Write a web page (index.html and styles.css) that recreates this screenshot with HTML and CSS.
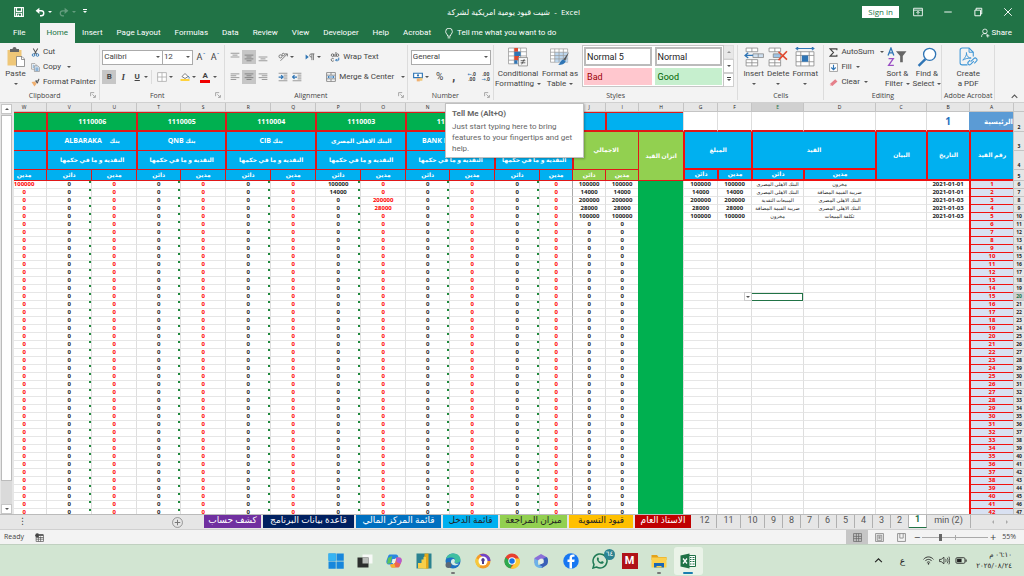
FILE: index.html
```html
<!DOCTYPE html>
<html lang="en">
<head>
    <meta charset="UTF-8">
    <meta name="viewport" content="width=device-width, initial-scale=1.0">
    <title>Excel</title>
    <link rel="stylesheet" href="styles.css">
</head>
<body>

    <!-- Title bar -->
    <div class="titlebar">
        <div class="quick">
            <button class="ico-btn" aria-label="Save"><svg viewBox="0 0 16 16"><path d="M1 1h14v14H1z M4 1v6h8V1 M4 15v-5h8v5" fill="none" stroke="#fff" stroke-width="1.8"/><path d="M6 12h2v3H6z" fill="#fff"/></svg></button>
            <button class="ico-btn" aria-label="Undo"><svg viewBox="0 0 16 16"><path d="M3 6h7a4 4 0 0 1 0 8H8" fill="none" stroke="#fff" stroke-width="2.2"/><path d="M7 1L1 6l6 5z" fill="#fff"/></svg><i class="caret light"></i></button>
            <button class="ico-btn dim" aria-label="Redo"><svg viewBox="0 0 16 16"><path d="M13 6H6a4 4 0 0 0 0 8h2" fill="none" stroke="#fff" stroke-width="2"/><path d="M9 1l6 5-6 5z" fill="#fff"/></svg><i class="caret light"></i></button>
            <button class="ico-btn" aria-label="Customize"><i class="caret light bar"></i></button>
        </div>
        <div class="title">شيت قيود يومية امريكية لشركة &nbsp;-&nbsp; Excel</div>
        <div class="window-btns">
            <button class="signin">Sign in</button>
            <button class="ico-btn" aria-label="Ribbon options"><svg viewBox="0 0 16 16"><path d="M1 2h14v12H1z M1 5h14 M8 12V7 M5.500 9.500L8 7l2.500 2.500" fill="none" stroke="#fff" stroke-width="1.400"/></svg></button>
            <button class="ico-btn" aria-label="Minimize"><svg viewBox="0 0 16 16"><path d="M2 8h12" stroke="#fff" stroke-width="1.500"/></svg></button>
            <button class="ico-btn" aria-label="Restore"><svg viewBox="0 0 16 16"><path d="M3 5h9v9H3z M5 5V2h9v9h-2" fill="none" stroke="#fff" stroke-width="1.500"/></svg></button>
            <button class="ico-btn" aria-label="Close"><svg viewBox="0 0 16 16"><path d="M2 2l12 12M14 2L2 14" stroke="#fff" stroke-width="1.500"/></svg></button>
        </div>
    </div>

    <!-- Ribbon tabs -->
    <div class="tabs">
        <a href="#" class="file">File</a>
        <a href="#" class="active">Home</a>
        <a href="#">Insert</a>
        <a href="#">Page Layout</a>
        <a href="#">Formulas</a>
        <a href="#">Data</a>
        <a href="#">Review</a>
        <a href="#">View</a>
        <a href="#">Developer</a>
        <a href="#">Help</a>
        <a href="#">Acrobat</a>
        <button class="tell"><svg viewBox="0 0 12 16"><path d="M4 12c0-3-3-3.500-3-7a5 5 0 0 1 10 0c0 3.500-3 4-3 7z M4 14.500h4" fill="none" stroke="#fff" stroke-width="1.300"/></svg>Tell me what you want to do</button>
        <button class="share"><svg viewBox="0 0 16 16"><circle cx="7" cy="5" r="4" fill="none" stroke="#fff" stroke-width="1.400"/><path d="M1 15c0-4 2-6 6-6 2 0 3 .5 4 1.500M12 10v6M9 13h6" fill="none" stroke="#fff" stroke-width="1.400"/></svg>Share</button>
    </div>

    <!-- Ribbon -->
    <div class="ribbon">
        <div class="group g-clipboard">
            <div class="body">
                <button class="big"><svg viewBox="0 0 36 40"><path d="M1 6h28v31H1z" fill="#efc778"/><path d="M6 4h5a4 4 0 0 1 8 0h5v6H6z" fill="#666"/><path d="M19 19h11l5 5v15H19z" fill="#fff" stroke="#777" stroke-width="1.500"/><path d="M29 19v6h6" fill="none" stroke="#777" stroke-width="1.500"/></svg>Paste<i class="caret"></i></button>
                <div class="stack">
                    <button class="line"><svg viewBox="0 0 16 16"><path d="M4 1l6 10M12 1L6 11" stroke="#555" stroke-width="1.800"/><circle cx="4.500" cy="12.500" r="2.300" fill="none" stroke="#2f75b5" stroke-width="1.600"/><circle cx="11.500" cy="12.500" r="2.300" fill="none" stroke="#2f75b5" stroke-width="1.600"/></svg>Cut</button>
                    <button class="line"><svg viewBox="0 0 16 16"><path d="M1 1h6l2 2v8H1z" fill="#fff" stroke="#777"/><path d="M6 5h6l3 3v7H6z" fill="#dbe7f3" stroke="#777"/><path d="M8 9h5M8 11h5M8 13h5M3 4h3M3 6h2M3 8h2" stroke="#2f75b5"/></svg>Copy<i class="caret far"></i></button>
                    <button class="line"><svg viewBox="0 0 16 16"><path d="M1 7l6-1 3 4-4 5z" fill="#f0b070"/><path d="M7 5l4 5 2-2-3-4z" fill="#555"/><path d="M11 5l3-4 1 1-2 5z" fill="#555"/></svg>Format Painter</button>
                </div>
            </div>
            <div class="label has-launch">Clipboard<svg class="launch" viewBox="0 0 10 10"><path d="M1 7V1h6M4 4l4 4M9 5v4H5" fill="none" stroke="#777"/></svg></div>
        </div>

        <div class="group g-font">
            <div class="body rows">
                <div class="row">
                    <span class="combo c-font"><select aria-label="Font"><option>Calibri</option></select></span><span class="combo c-size"><select aria-label="Font size"><option>12</option></select></span>
                    <button class="tool grow first" aria-label="Increase font size">A<sup>ˆ</sup></button>
                    <button class="tool grow" aria-label="Decrease font size">A<sup>ˇ</sup></button>
                </div>
                <div class="row">
                    <button class="tool on b">B</button>
                    <button class="tool it">I</button>
                    <button class="tool un">U</button><i class="caret"></i>
                    <i class="vsep"></i>
                    <button class="tool" aria-label="Borders"><svg viewBox="0 0 16 16"><path d="M1 1h14v14H1zM8 1v14M1 8h14" fill="#fff" stroke="#aaa" stroke-width="1.300"/></svg></button><i class="caret"></i>
                    <button class="tool wide" aria-label="Fill color"><svg viewBox="0 0 20 18"><path d="M4 8l6-6 6 6-6 4z" fill="#fff" stroke="#555" stroke-width="1.500"/><path d="M16 7c2 2 3 3 2 5" stroke="#2f75b5" stroke-width="2" fill="none"/><path d="M1 13h18v4H1z" fill="#ffd23c"/></svg></button><i class="caret"></i>
                    <button class="tool fc" aria-label="Font color">A</button><i class="caret"></i>
                </div>
            </div>
            <div class="label has-launch">Font<svg class="launch" viewBox="0 0 10 10"><path d="M1 7V1h6M4 4l4 4M9 5v4H5" fill="none" stroke="#777"/></svg></div>
        </div>

        <div class="group g-align">
            <div class="body rows">
                <div class="row">
                    <button class="tool" aria-label="Top align"><svg viewBox="0 0 16 16"><path d="M1 2h14M4 5h8M1 8h14" stroke="#888" stroke-width="1.300"/></svg></button>
                    <button class="tool on" aria-label="Middle align"><svg viewBox="0 0 16 16"><path d="M1 5h14M4 8h8M1 11h14M4 14h8" stroke="#777" stroke-width="1.300"/></svg></button>
                    <button class="tool" aria-label="Bottom align"><svg viewBox="0 0 16 16"><path d="M1 8h14M4 11h8M1 14h14" stroke="#888" stroke-width="1.300"/></svg></button>
                    <button class="tool orient" aria-label="Orientation"><svg viewBox="0 0 16 16"><path d="M4 14L15 3M11 3h4v4" fill="none" stroke="#666" stroke-width="1.300"/><circle cx="4" cy="7" r="2.500" fill="none" stroke="#666" stroke-width="1.300"/><circle cx="8.500" cy="4" r="2" fill="none" stroke="#666" stroke-width="1.300"/></svg></button><i class="caret"></i>
                    <button class="tool para" aria-label="Text direction"><svg viewBox="0 0 16 16"><path d="M1 4l5 4-5 4z" fill="#2f75b5"/><path d="M15 3H10a2.500 2.500 0 0 0 0 5h1M11 3v10M13.500 3v10" fill="none" stroke="#666" stroke-width="1.300"/></svg></button><i class="caret"></i>
                    <button class="line wrap"><svg viewBox="0 0 16 16"><circle cx="4" cy="5" r="2" fill="none" stroke="#555" stroke-width="1.300"/><path d="M6.500 3v5M9.500 0v8" stroke="#555" stroke-width="1.300"/><circle cx="12" cy="5" r="2" fill="none" stroke="#555" stroke-width="1.300"/><path d="M6 11a2.300 2.300 0 1 0 0 3" fill="none" stroke="#555" stroke-width="1.300"/><path d="M14 9v4H9M11 11l-2 2 2 2" fill="none" stroke="#2f75b5" stroke-width="1.500"/></svg>Wrap Text</button>
                </div>
                <div class="row">
                    <button class="tool" aria-label="Align left"><svg viewBox="0 0 16 16"><path d="M1 3h14M1 6h9M1 9h14M1 12h9" stroke="#888" stroke-width="1.300"/></svg></button>
                    <button class="tool on" aria-label="Center"><svg viewBox="0 0 16 16"><path d="M1 3h14M4 6h8M1 9h14M4 12h8" stroke="#777" stroke-width="1.300"/></svg></button>
                    <button class="tool" aria-label="Align right"><svg viewBox="0 0 16 16"><path d="M1 3h14M6 6h9M1 9h14M6 12h9" stroke="#888" stroke-width="1.300"/></svg></button>
                    <button class="tool orient" aria-label="Decrease indent"><svg viewBox="0 0 16 16"><path d="M1 2h14M1 14h14M9 5h6M9 8h6M9 11h6" stroke="#888" stroke-width="1.300"/><path d="M1 8h7M5 5l3 3-3 3" fill="none" stroke="#2f75b5" stroke-width="2"/></svg></button>
                    <button class="tool" aria-label="Increase indent"><svg viewBox="0 0 16 16"><path d="M1 2h14M1 14h14M9 5h6M9 8h6M9 11h6" stroke="#888" stroke-width="1.300"/><path d="M8 8H1M4 5L1 8l3 3" fill="none" stroke="#2f75b5" stroke-width="2"/></svg></button>
                    <button class="line merge"><svg viewBox="0 0 16 16"><path d="M1 1h14v14H1zM1 5h14M1 11h14M8 1v4M8 11v4" fill="#fff" stroke="#777" stroke-width="1.300"/><path d="M3 8h10M5 6L3 8l2 2M11 6l2 2-2 2" fill="none" stroke="#2f75b5" stroke-width="1.500"/></svg>Merge &amp; Center<i class="caret"></i></button>
                </div>
            </div>
            <div class="label has-launch">Alignment<svg class="launch" viewBox="0 0 10 10"><path d="M1 7V1h6M4 4l4 4M9 5v4H5" fill="none" stroke="#777"/></svg></div>
        </div>

        <div class="group g-number">
            <div class="body rows">
                <div class="row">
                    <span class="combo c-num"><select aria-label="Number format"><option>General</option></select></span>
                </div>
                <div class="row">
                    <button class="tool" aria-label="Accounting format"><svg viewBox="0 0 16 16"><path d="M1 2h14v7H1z" fill="#fff" stroke="#2f75b5" stroke-width="1.800"/><circle cx="8" cy="5.500" r="1.800" fill="#2f75b5"/><path d="M6 10h5v5H6z" fill="#f0b070"/><path d="M11 9h4v5h-4z" fill="#efc778"/></svg></button><i class="caret"></i>
                    <button class="tool pct">%</button>
                    <button class="tool comma">,</button>
                    <i class="vsep"></i>
                    <button class="tool dec" aria-label="Increase decimal"><span><b>←</b>.0</span><span>.00</span></button>
                    <button class="tool dec" aria-label="Decrease decimal"><span>.00</span><span><b>→</b>.0</span></button>
                </div>
            </div>
            <div class="label has-launch">Number<svg class="launch" viewBox="0 0 10 10"><path d="M1 7V1h6M4 4l4 4M9 5v4H5" fill="none" stroke="#777"/></svg></div>
        </div>

        <div class="group g-styles">
            <div class="body">
                <button class="big two cond"><svg viewBox="0 0 38 38"><path d="M1 2h34v30H1z" fill="#fff" stroke="#999" stroke-width="1.500"/><path d="M1 9h34M1 17h34M1 25h34M12 2v30M24 2v30" stroke="#999" stroke-width="1.500"/><path d="M12 2h7v7h-7zM12 17h9v8h-9z" fill="#e0492f"/><path d="M12 9h12v8H12zM12 25h6v7h-6z" fill="#2f75b5"/><path d="M20 20h17v16H20z" fill="#f6f6f6" stroke="#888" stroke-width="1.500"/><path d="M24 26h9M24 30h9M31 23l-5 10" stroke="#444" stroke-width="1.500"/></svg>Conditional<span>Formatting<i class="caret"></i></span></button>
                <button class="big two"><svg viewBox="0 0 42 38"><path d="M1 2h36v28H1z" fill="#fff" stroke="#999" stroke-width="1.500"/><path d="M10 9h27v21H10z" fill="#bdd7ee"/><path d="M1 9h36M1 16h36M1 23h36M10 2v28M19 2v28M28 2v28" stroke="#999" stroke-width="1.500"/><path d="M40 8l-12 16 4 3z" fill="#555"/><path d="M28 24l5 4c-2 6-8 8-16 8 4-3 5-11 11-12z" fill="#2f75b5"/></svg>Format as<span>Table<i class="caret"></i></span></button>
                <div class="gallery">
                    <button class="st picked">Normal 5</button>
                    <button class="st picked">Normal</button>
                    <button class="st bad">Bad</button>
                    <button class="st good">Good</button>
                </div>
                <div class="updown">
                    <button class="off" aria-label="Previous styles"><i class="caret up"></i></button>
                    <button aria-label="Next styles"><i class="caret"></i></button>
                    <button aria-label="More styles"><i class="caret bar"></i></button>
                </div>
            </div>
            <div class="label">Styles</div>
        </div>

        <div class="group g-cells">
            <div class="body">
                <button class="big"><svg viewBox="0 0 38 38"><path d="M4 2h22v7H4zM15 2v7M4 24h22v12H4zM15 24v12M4 30h22" fill="#fff" stroke="#888" stroke-width="1.500"/><path d="M17 13h20v7H17zM27 13v7" fill="#cfe0f0" stroke="#888" stroke-width="1.500"/><path d="M17 16H2M8 11l-6 5 6 5" fill="none" stroke="#2f75b5" stroke-width="2.500"/></svg>Insert<i class="caret"></i></button>
                <button class="big"><svg viewBox="0 0 38 38"><path d="M2 2h22v7H2zM13 2v7M2 24h22v12H2zM13 24v12M2 30h22" fill="#fff" stroke="#888" stroke-width="1.500"/><path d="M10 13h14v7H10z" fill="#9dc3e6" stroke="#888" stroke-width="1.500"/><path d="M20 9l16 15M36 8L20 25" stroke="#e0492f" stroke-width="3"/></svg>Delete<i class="caret"></i></button>
                <button class="big"><svg viewBox="0 0 38 38"><path d="M2 3h34M6 0L2 3l4 3M32 0l4 3-4 3" fill="none" stroke="#2f75b5" stroke-width="2"/><path d="M2 9h34v27H2z" fill="#fff" stroke="#888" stroke-width="1.500"/><path d="M2 16h34M2 28h34M11 9v27M27 9v27" stroke="#888" stroke-width="1.500"/><path d="M13 16h12v12H13z" fill="#2f75b5"/></svg>Format<i class="caret"></i></button>
            </div>
            <div class="label">Cells</div>
        </div>

        <div class="group g-edit">
            <div class="body">
                <div class="stack">
                    <button class="line"><svg viewBox="0 0 16 16"><path d="M14 4V1.500H2L8 8l-6 6.500h12V12" fill="none" stroke="#444" stroke-width="2"/></svg>AutoSum<i class="caret far"></i></button>
                    <button class="line"><svg viewBox="0 0 16 16"><path d="M1 1h14v14H1z" fill="#fff" stroke="#888" stroke-width="1.300"/><path d="M8 3v9M4 8l4 4 4-4" fill="none" stroke="#2f75b5" stroke-width="2"/></svg>Fill<i class="caret"></i></button>
                    <button class="line"><svg viewBox="0 0 16 16"><path d="M2 10L11 2l4 4-9 8H3z" fill="#e5808a"/><path d="M2 10l4 4H3l-2-2z" fill="#f6c5c9"/></svg>Clear<i class="caret"></i></button>
                </div>
                <button class="big two"><svg viewBox="0 0 38 38"><path d="M2 16L7.500 2 13 16M4 11h7" fill="none" stroke="#2f75b5" stroke-width="2.500"/><path d="M3 22h9L3 35h10" fill="none" stroke="#9a4fc4" stroke-width="2.500"/><path d="M17 8h20l-7 9v12h-5V17z" fill="#666"/></svg>Sort &amp;<span>Filter<i class="caret"></i></span></button>
                <button class="big two"><svg viewBox="0 0 38 38"><circle cx="24" cy="14" r="11.500" fill="#fff" stroke="#2f75b5" stroke-width="2.500"/><path d="M16 23L3 36" stroke="#2f75b5" stroke-width="4.500"/></svg>Find &amp;<span>Select<i class="caret"></i></span></button>
            </div>
            <div class="label">Editing</div>
        </div>

        <div class="group g-adobe">
            <div class="body">
                <button class="big two"><svg viewBox="0 0 38 38"><path d="M18 34H8a4 4 0 0 1-4-4V6a4 4 0 0 1 4-4h13l8 8v8" fill="none" stroke="#3c95d6" stroke-width="2"/><path d="M21 2v8h8M9 25c5-5 8-10 7-15M16 12c1 6 4 9 9 9-6 0-11 1-16 4" fill="none" stroke="#3c95d6" stroke-width="1.800"/><path d="M24 28l6-6a3 3 0 0 1 5 5l-4 4M30 27l-6 6a3 3 0 0 1-4-5l3-3" fill="none" stroke="#3c95d6" stroke-width="2"/></svg>Create<span>a PDF</span></button>
            </div>
            <div class="label">Adobe Acrobat</div>
        </div>

        <button class="collapse" aria-label="Collapse the ribbon"><svg viewBox="0 0 10 10"><path d="M1 7l4-4 4 4" fill="none" stroke="#555" stroke-width="1.500"/></svg></button>
    </div>

    <!-- Sheet -->
    <div class="sheet">
        <div class="scroll">
            <button aria-label="Scroll up"><i class="caret up"></i></button>
            <div class="track"><div class="thumb"></div></div>
            <button aria-label="Scroll down"><i class="caret"></i></button>
        </div>
        <div class="grid" dir="rtl">
            <table>
                <colgroup id="cols"></colgroup>
                <thead>
                    <tr class="letters" id="letters"></tr>
                    <tr class="r2">
                        <th class="num">2</th>
                        <td class="main-link">الرئيسية</td>
                        <td class="one">1</td>
                        <td></td><td></td><td></td><td></td><td></td>
                        <td class="blue" colspan="2"></td>
                        <td class="blue frz"></td>
                        <td class="green" colspan="2">1110001</td>
                        <td class="green" colspan="2">1110002</td>
                        <td class="green" colspan="2">1110003</td>
                        <td class="green" colspan="2">1110004</td>
                        <td class="green" colspan="2">1110005</td>
                        <td class="green" colspan="2">1110006</td>
                        <td class="green"></td>
                    </tr>
                    <tr class="r3">
                        <th class="num">3</th>
                        <td class="blue thick" rowspan="3">رقم القيد</td>
                        <td class="blue thick" rowspan="3">التاريخ</td>
                        <td class="blue thick" rowspan="3">البيان</td>
                        <td class="blue thick" rowspan="2" colspan="2">القيد</td>
                        <td class="blue thick" rowspan="2" colspan="2">المبلغ</td>
                        <td class="lime" rowspan="3">اتزان القيد</td>
                        <td class="lime" rowspan="2" colspan="2">الاجمالي</td>
                        <td class="blue" colspan="2">الخزينة</td>
                        <td class="blue" colspan="2">بنك &nbsp;&nbsp;&nbsp; <span class="lat">BANK MISR</span></td>
                        <td class="blue" colspan="2">البنك الاهلى المصرى</td>
                        <td class="blue" colspan="2">بنك <span class="lat">CIB</span></td>
                        <td class="blue" colspan="2">بنك <span class="lat">QNB</span></td>
                        <td class="blue" colspan="2">بنك &nbsp;&nbsp;&nbsp; <span class="lat">ALBARAKA</span></td>
                        <td class="blue"></td>
                    </tr>
                    <tr class="r4">
                        <th class="num">4</th>
                        <td class="blue" colspan="2">النقدية و ما في حكمها</td>
                        <td class="blue" colspan="2">النقدية و ما في حكمها</td>
                        <td class="blue" colspan="2">النقدية و ما في حكمها</td>
                        <td class="blue" colspan="2">النقدية و ما في حكمها</td>
                        <td class="blue" colspan="2">النقدية و ما في حكمها</td>
                        <td class="blue" colspan="2">النقدية و ما في حكمها</td>
                        <td class="blue"></td>
                    </tr>
                    <tr class="r5" id="sides"></tr>
                </thead>
                <tbody id="rows"></tbody>
            </table>
        </div>
        <div class="tooltip">
            <b>Tell Me (Alt+Q)</b>
            <p>Just start typing here to bring<br>features to your fingertips and get<br>help.</p>
        </div>
    </div>

    <!-- Sheet tabs -->
    <div class="sheets">
        <span class="dots">⋮</span>
        <button class="add" aria-label="New sheet"><svg viewBox="0 0 20 20"><circle cx="10" cy="10" r="9" fill="none" stroke="#777" stroke-width="1.300"/><path d="M10 5v10M5 10h10" stroke="#777" stroke-width="1.800"/></svg></button>
        <button class="tab t1">كشف حساب</button>
        <button class="tab t2">قاعدة بيانات البرنامج</button>
        <button class="tab t3">قائمة المركز المالي</button>
        <button class="tab t4">قائمة الدخل</button>
        <button class="tab t5">ميزان المراجعة</button>
        <button class="tab t6">قيود التسوية</button>
        <button class="tab t7">الاستاذ العام</button>
        <button class="tab n w">12</button>
        <button class="tab n w">11</button>
        <button class="tab n w">10</button>
        <button class="tab n">9</button>
        <button class="tab n">8</button>
        <button class="tab n">7</button>
        <button class="tab n">6</button>
        <button class="tab n">5</button>
        <button class="tab n">4</button>
        <button class="tab n">3</button>
        <button class="tab n">2</button>
        <button class="tab n current">1</button>
        <button class="tab n min">min (2)</button>
        <span class="arrows"><i></i><i class="r"></i></span>
    </div>

    <!-- Status bar -->
    <div class="status">
        <span>Ready</span>
        <svg class="macro" viewBox="0 0 16 16"><path d="M2 4h13v11H2zM2 8h13M2 11h13M6 6v9M10 6v9" fill="#fff" stroke="#555" stroke-width="1.300"/><circle cx="4" cy="4" r="3.500" fill="#444"/><path d="M6 2h9v3H6z" fill="#555"/></svg>
        <div class="views">
            <button class="on" aria-label="Normal view"><svg viewBox="0 0 16 16"><path d="M1 1h14v14H1zM1 6h14M1 10h14M6 1v14M10 1v14" fill="none" stroke="#666" stroke-width="1.300"/></svg></button>
            <button aria-label="Page layout view"><svg viewBox="0 0 16 16"><path d="M1 1h14v14H1zM4 4h8v9H4zM6 6h4M6 8h4M6 10h4" fill="none" stroke="#777" stroke-width="1.300"/></svg></button>
            <button aria-label="Page break view"><svg viewBox="0 0 16 16"><path d="M1 1h14v14H1zM5 1v8h6M11 1v8" fill="none" stroke="#777" stroke-width="1.300"/></svg></button>
        </div>
        <button class="zoom-btn" aria-label="Zoom out">−</button>
        <input class="zoom" type="range" min="0" max="100" value="26" aria-label="Zoom">
        <button class="zoom-btn" aria-label="Zoom in">+</button>
        <span class="percent">55%</span>
    </div>

    <!-- Taskbar -->
    <div class="taskbar">
        <div class="apps">
            <button aria-label="Start"><svg viewBox="0 0 32 32"><path d="M1 1h14.500v14.500H1zM17 1h14.500v14.500H17zM1 17h14.500v14.500H1zM17 17h14.500v14.500H17z" fill="#1787dc"/><path d="M1 1h14.500v14.500H1z" fill="#35b4f3"/></svg></button>
            <button aria-label="Task view"><svg viewBox="0 0 32 32"><path d="M11 3h20v18H11z" fill="#f7f9f7"/><path d="M1 9h22v20H1z" fill="#2c2e2d"/><path d="M11 9h12v12H11z" fill="#b9bdb9"/></svg></button>
            <button aria-label="Copilot"><svg viewBox="0 0 32 32"><path d="M9 3h11c3 0 4 2 5 6l-7 2-5 12H6c-5 0-6-4-5-8l3-8c1-3 2-4 5-4z" fill="#2a87e0"/><path d="M4 10l8-4-2 14-8 2z" fill="#5cc45c"/><path d="M12 29h11c3 0 4-1 5-4l3-8c1-4 0-8-5-8h-5l-5 13-7 1c0 4 1 6 3 6z" fill="#ee6550"/><path d="M21 9h5c5 0 6 4 5 8l-2 5-8-4z" fill="#b15bd6"/><path d="M9 23l8-1 2 7h-7c-2 0-3-2-3-6z" fill="#f4b52e"/><path d="M13 12h7l-2 8h-7z" fill="#e8f2e8"/></svg></button>
            <button aria-label="Power BI"><svg viewBox="0 0 32 32"><path d="M1 1h30v30H1z" fill="#2b8290"/><path d="M6 20h5v-7h6V6h6v25H4V20z" fill="#f7cf4a"/><path d="M17 1h8v30h-8z" fill="#e4a819"/><path d="M15 8h5v23h-5z" fill="#f7cf4a"/></svg></button>
            <button aria-label="Edge" class="run"><svg viewBox="0 0 32 32"><circle cx="16" cy="16" r="15" fill="#1d72c4"/><path d="M2 12C4 4 10 1 17 1c9 0 14 6 14 12 0 5-4 7-8 7-3 0-4-1-4-2s1-2 1-4c0-3-3-5-7-5-5 0-9 1-11 3z" fill="#40bfa0"/><path d="M12 16c1-3 4-5 7-3 2 2 0 4 0 6 1 3 6 3 9 2-3 4-8 5-12 3-3-2-5-4-4-8z" fill="#d6ede4"/><circle cx="7" cy="24" r="6" fill="#5b6876"/></svg></button>
            <button aria-label="Browser"><svg viewBox="0 0 32 32"><circle cx="16" cy="16" r="15" fill="#f49b29"/><path d="M9 3a15 15 0 0 1 22 13h-7L16 8z" fill="#7044c9"/><path d="M2 10a15 15 0 0 0 6 19l6-7-5-8z" fill="#f6c83c"/><circle cx="16" cy="16" r="9" fill="#fff"/><path d="M16 10a4 4 0 0 1 2 7v5h-4v-5a4 4 0 0 1 2-7z" fill="#4c3b8c"/></svg></button>
            <button aria-label="Chrome"><svg viewBox="0 0 32 32"><circle cx="16" cy="16" r="15" fill="#e8402f"/><path d="M3 8.500L13 17l3 6-3 8A15 15 0 0 1 3 8.500z" fill="#2da94f"/><path d="M31 11a15 15 0 0 1-18 20l7-9 2-11z" fill="#fcc934"/><circle cx="16" cy="16" r="7.500" fill="#fff"/><circle cx="16" cy="16" r="5.500" fill="#1a73e8"/></svg></button>
            <button aria-label="Microsoft 365"><svg viewBox="0 0 32 32"><path d="M16 2l11 6v8l-9-5-8 4-1 8-6-3V10z" fill="#8b6fd8"/><path d="M27 8c3 2 3 4 3 8s-1 7-4 9l-8 5-8-5 11-5V11z" fill="#3a5fb8"/><path d="M3 11l7 4v8l9 4-3 3c-7 0-13-4-13-9z" fill="#6db2e8"/><path d="M16 11l5 3v5l-5 3-5-3v-5z" fill="#e6f0ea"/></svg></button>
            <button aria-label="Facebook"><svg viewBox="0 0 32 32"><circle cx="16" cy="16" r="15.500" fill="#1877f2"/><path d="M18 31V18h4.500l.8-5H18v-3c0-2 1-2.500 2.500-2.500H23V3c-6-1-10 1-10 7v3H9v5h4v13z" fill="#fff"/></svg></button>
            <button aria-label="WhatsApp" class="wa"><svg viewBox="0 0 32 32"><path d="M2 30l2-7A14 14 0 1 1 9 28z" fill="none" stroke="#1f7a55" stroke-width="3"/><path d="M10 10c2-3 3-1 4 2l-1 2c1 2 3 4 5 4l2-2c3 1 5 3 2 5-5 3-14-5-12-11z" fill="#1f7a55"/></svg><span class="badge">٦٤</span></button>
            <button aria-label="McAfee"><span class="mc">M</span></button>
            <button aria-label="File Explorer" class="run"><svg viewBox="0 0 32 32"><path d="M1 4h11l3 4h16v6H1z" fill="#e3a21a"/><path d="M1 9h30v20H1z" fill="#fbd04e"/><path d="M6 20h20v9H6z" fill="#1b66b5"/><path d="M11 26h10v3H11z" fill="#fbd04e"/></svg></button>
            <button aria-label="Excel" class="open"><svg viewBox="0 0 32 32"><path d="M17 5h14v22H17z" fill="#fff" stroke="#1e7145" stroke-width="2"/><path d="M20 9h3M25 9h4M20 13h3M25 13h4M20 17h3M25 17h4M20 22h3M25 22h4" stroke="#1e7145" stroke-width="2"/><path d="M1 5l18-4v30L1 27z" fill="#1e7145"/><path d="M6 11l8 10M14 11L6 21" stroke="#fff" stroke-width="2.500"/></svg></button>
        </div>
        <div class="tray">
            <svg class="s10" viewBox="0 0 16 16"><path d="M2 11l6-6 6 6" fill="none" stroke="#222" stroke-width="2"/></svg>
            <span class="lang">ع</span>
            <svg class="wifi" viewBox="0 0 20 16"><path d="M1 6c5-6 13-6 18 0M4 9c3-4 9-4 12 0M7 12c2-2 4-2 6 0" fill="none" stroke="#222" stroke-width="1.600"/><circle cx="10" cy="14" r="1.500" fill="#222"/></svg>
            <svg class="vol" viewBox="0 0 20 16"><path d="M1 6h3l5-4v12l-5-4H1z M12 5c1 2 1 4 0 6M15 3c2 3 2 7 0 10M18 1c2 4 2 10 0 14" fill="none" stroke="#222" stroke-width="1.400"/></svg>
            <svg class="bat" viewBox="0 0 20 16"><rect x="1" y="3" width="16" height="10" rx="2" fill="none" stroke="#222" stroke-width="1.500"/><path d="M3 5h8v6H3zM18 6h2v4h-2z" fill="#222"/></svg>
            <div class="clock" dir="rtl"><div>٠٦:١٠ م</div><div>٢٠٢٥/٠٨/٢٤</div></div>
        </div>
    </div>

    <script src="script.js"></script>
</body>
</html>
```
FILE: styles.css
```css
* {
    box-sizing: border-box;
}
body {
    margin: 0;
    height: 100vh;
    display: flex;
    flex-direction: column;
    overflow: hidden;
    font-family: Roboto, "DejaVu Sans", sans-serif;
    font-size: 8px;
    line-height: 10px;
    color: #444;
    background: #f3f3f3;
}
button, select, input {
    font: inherit;
    color: inherit;
    margin: 0;
    padding: 0;
    border: none;
    background: none;
    white-space: nowrap;
}
svg {
    display: block;
    flex: none;
}
.caret {
    flex: none;
    border: 2px solid transparent;
    border-top-color: #555;
    border-bottom: none;
}
.caret.up {
    border-bottom: 2px solid #555;
    border-top: none;
}
.caret.light {
    border-top-color: #fff;
}
.caret.bar {
    position: relative;
}
.caret.bar::before {
    content: "";
    position: absolute;
    left: -2px;
    top: -4px;
    width: 4px;
    height: 1px;
    background: currentColor;
}

/* title bar */
.titlebar {
    display: flex;
    align-items: center;
    height: 23px;
    background: #217346;
    color: #fff;
}
.quick {
    flex: 1;
    display: flex;
    align-items: center;
    gap: 7px;
    padding-left: 14px;
}
.quick .ico-btn {
    margin-right: 4px;
}
.ico-btn {
    display: flex;
    align-items: center;
    gap: 3px;
}
.quick .ico-btn + .ico-btn {
    margin-right: 0;
}
.ico-btn svg {
    width: 10px;
    height: 10px;
}
.dim {
    opacity: 0.3;
}
.title {
    white-space: nowrap;
    font-family: "Open Sans", "DejaVu Sans", sans-serif;
}
.window-btns {
    flex: 1;
    display: flex;
    justify-content: flex-end;
    align-items: center;
    gap: 20px;
    padding-right: 11px;
}
.signin {
    background: #fff;
    color: #217346;
    height: 12px;
    padding: 0 6px;
    margin-right: -6px;
    font-family: "Open Sans", sans-serif;
}

/* ribbon tabs */
.tabs {
    display: flex;
    align-items: center;
    height: 20px;
    background: #217346;
    color: #fff;
}
.tabs a {
    color: #fff;
    text-decoration: none;
    line-height: 20px;
    padding: 0 7px;
    white-space: nowrap;
}
.tabs .file {
    padding: 0 14px 0 13px;
}
.tabs .active {
    background: #f3f3f3;
    color: #217346;
}
.tell {
    display: flex;
    align-items: center;
    gap: 4px;
    padding-left: 7px;
}
.tell svg {
    width: 8px;
    height: 11px;
}
.share {
    display: flex;
    align-items: center;
    gap: 2px;
    margin-left: auto;
    margin-right: 12px;
}
.share svg {
    width: 9px;
    height: 10px;
}

/* ribbon */
.ribbon {
    display: flex;
    height: 60px;
    background: #f3f3f3;
    border-bottom: 1px solid #d0d0d0;
}
.group {
    display: flex;
    flex-direction: column;
    min-width: 0;
    border-right: 1px solid #dcdcdc;
    margin: 2px 0;
}
.g-clipboard { flex: 100; }
.g-font { flex: 125; }
.g-align { flex: 183; }
.g-number { flex: 86; }
.g-styles { flex: 245; }
.g-cells { flex: 86; }
.g-edit { flex: 118; }
.g-adobe { flex: 52; }
.body {
    flex: 1;
    display: flex;
    min-width: 0;
}
.label {
    position: relative;
    height: 10px;
    line-height: 11px;
    font-family: "Open Sans", sans-serif;
    font-size: 7px;
    text-align: center;
    white-space: nowrap;
}
.has-launch {
    padding-right: 10px;
}
.launch {
    position: absolute;
    right: 3px;
    top: 2px;
    width: 6px;
    height: 6px;
}
.collapse {
    width: 29px;
    align-self: flex-end;
    padding: 0 0 2px 16px;
}
.collapse svg {
    width: 7px;
    height: 7px;
}
.big {
    display: flex;
    flex-direction: column;
    align-items: center;
    padding-top: 2px;
}
.big svg {
    height: 20px;
    width: 20px;
    margin-bottom: 2px;
}
.big .caret {
    margin-top: 4px;
}
.big span {
    display: flex;
    align-items: center;
    gap: 3px;
}
.big span .caret {
    margin-top: 0;
}
.g-clipboard .big {
    padding-left: 7px;
    width: 24px;
}
.stack {
    display: flex;
    flex-direction: column;
    justify-content: space-between;
    padding: 2px 0 3px 7px;
}
.line {
    display: flex;
    align-items: center;
    gap: 3px;
}
.line svg {
    width: 9px;
    height: 9px;
}
.line .caret {
    margin-left: 1px;
}
.line .far {
    margin-left: 3px;
}
.rows {
    flex-direction: column;
    gap: 6px;
    padding-top: 5px;
}
.row {
    display: flex;
    align-items: center;
    height: 14px;
    padding: 0 2px;
}
.combo {
    position: relative;
    height: 15px;
    border: 1px solid #ababab;
    background: #fff;
}
.combo select {
    appearance: none;
    width: 100%;
    height: 100%;
    padding-left: 1px;
    line-height: 12px;
    display: block;
}
.combo::after {
    content: "";
    position: absolute;
    right: 2px;
    top: 5px;
    border: 2px solid transparent;
    border-top-color: #555;
    border-bottom: none;
}
.c-font { width: 62px; }
.c-size { width: 31px; border-left: none; }
.c-num { width: 82px; }
.tool {
    display: flex;
    align-items: center;
    justify-content: center;
    width: 14px;
    height: 14px;
    flex: none;
}
.tool svg {
    width: 10px;
    height: 10px;
}
.tool.on {
    background: #c6c6c6;
}
.grow {
    font-size: 9px;
}
.grow.first {
    margin-left: 1px;
}
.grow sup {
    font-size: 7px;
    color: #2f75b5;
    line-height: 7px;
}
.b { font-weight: bold; }
.it { font-style: italic; font-weight: bold; font-family: "Liberation Serif", serif; font-size: 9px; }
.un { text-decoration: underline; font-weight: bold; }
.vsep {
    width: 1px;
    height: 14px;
    background: #dcdcdc;
    margin: 0 7px 0 8px;
}
.g-font .vsep {
    margin: 0 3px;
}
.wide {
    margin-left: 5px;
}
.fc {
    height: 12px;
    width: 10px;
    margin: 0 3px 0 4px;
    border-bottom: 3px solid #f00000;
    font-weight: bold;
    line-height: 9px;
}
.orient { margin-left: 6px; }
.para { margin-left: 9px; }
.wrap { margin-left: 9px; }
.merge { margin-left: 22px; }
.merge svg, .wrap svg { width: 10px; height: 10px; }
.merge .caret { margin-left: 4px; }
.g-align .row { padding-left: 3px; }
.g-number .row { padding-left: 3px; }
.pct { font-size: 10px; margin-left: 4px; }
.comma { font-size: 12px; font-weight: bold; line-height: 6px; }
.g-number .vsep { margin: 0 3px 0 1px; }
.dec {
    flex-direction: column;
    font-size: 5px;
    line-height: 5px;
    font-weight: bold;
}
.dec b { color: #2f75b5; }

/* styles gallery */
.g-styles .big { width: 42px; }
.g-styles .cond { margin-left: 3px; }
.gallery {
    flex: 1;
    display: grid;
    grid-template-columns: 1fr 1fr;
    grid-template-rows: 19px 17px;
    gap: 2px 3px;
    padding: 1px 1px;
    margin-left: 1px;
    border: 1px solid #c6c6c6;
    background: #fff;
    height: 42px;
}
.st {
    text-align: left;
    padding-left: 3px;
    color: #222;
    font-size: 9px;
}
.picked { border: 2px solid #bbb; padding-left: 1px; }
.bad { background: #ffc7ce; color: #9c0006; }
.good { background: #c6efce; color: #006100; }
.updown {
    display: flex;
    flex-direction: column;
    width: 10px;
    height: 42px;
    margin-right: 3px;
}
.updown button {
    flex: 1;
    display: flex;
    align-items: center;
    justify-content: center;
    border: 1px solid #d0d0d0;
    border-left: none;
    background: #fff;
}
.updown .off {
    background: #e2e2e2;
    opacity: 0.6;
}
.g-cells .body {
    justify-content: center;
    gap: 3px;
}
.g-edit .body {
    gap: 2px;
}
.g-edit .stack {
    width: 58px;
    padding-left: 5px;
}
.g-edit .big { flex: 1; }
.g-adobe .body { justify-content: center; }

/* sheet */
.sheet {
    flex: 1;
    min-height: 0;
    display: flex;
    position: relative;
    background: #e6e6e6;
}
.scroll {
    display: flex;
    flex-direction: column;
    width: 14px;
    padding: 1px 2px 0 1px;
}
.scroll button {
    display: flex;
    align-items: center;
    justify-content: center;
    height: 10px;
    background: #fff;
    border: 1px solid #c6c6c6;
}
.track {
    flex: 1;
    background: #dadada;
    padding-top: 1px;
}
.thumb {
    height: 94%;
    background: #fff;
    border: 1px solid #bbb;
}
.grid {
    flex: 1;
    min-width: 0;
    overflow: hidden;
    background: #fff;
    font-family: "Open Sans", "DejaVu Sans", sans-serif;
}
.grid table {
    width: calc(100% + 13px);
    table-layout: fixed;
    border-collapse: separate;
    border-spacing: 0;
    font-size: 6px;
    line-height: 7px;
    font-weight: bold;
    color: #222;
}
.grid td, .grid th {
    padding: 0;
    text-align: center;
    white-space: nowrap;
    border-left: 1px solid #dedede;
    border-bottom: 1px solid #e6e6e6;
}
.letters {
    height: 9px;
}
.letters th, .grid .num {
    background: #e6e6e6;
    border-color: #c4c4c4;
    font-weight: normal;
    font-size: 5px;
}
.letters th.sel, .grid .num.sel {
    background: #d0d0d0;
    color: #217346;
}
.grid .num { font-weight: bold; vertical-align: bottom; }
.r2 { height: 20px; }
.r3, .r4 { height: 19px; }
.r5 { height: 11px; }
.grid thead td {
    font-size: 6px;
    line-height: 9px;
    overflow: hidden;
}
.lat, .grid thead .green {
    font-size: 7px;
}
.grid thead .blue, .grid thead .lime, .grid thead .green {
    color: #fff;
    border-left: 1px solid #e01818;
    border-bottom: 1px solid #e01818;
}
.grid .blue { background: #00b0f0; }
.grid .lime { background: #92d050; }
.grid .green { background: #00b050; }
.grid thead .r2 .blue, .grid thead .r2 .green { border-top: 1px solid #e01818; }
.grid thead td[colspan] { border-left-width: 2px; }
.grid thead .thick { border-left-width: 2px; border-bottom-width: 2px; border-color: #f01010; }
.grid thead .main-link {
    background: #5b9bd5;
    color: #fff;
    text-align: right;
    font-size: 7px;
    border-left-color: #5b9bd5;
}
.grid thead .one {
    font-size: 10px;
    color: #1f6fc0;
}
.grid thead .r2 td {
    border-bottom: 2px solid #e01818;
}
.grid tbody .id {
    background: #d9e1f2;
    color: #f00;
    border-bottom-color: #f01010;
    border-left: 2px solid #f01010;
}
.red { color: #f00; }
.grid tbody .full {
    background: #00b050;
    border-color: #00b050;
}
.grid tbody .account {
    font-size: 5px;
    font-weight: normal;
}
.err {
    background: linear-gradient(#1e8a3c, #1e8a3c) right top / 2px 2px no-repeat;
}
.grid .frz { border-left-color: #aaa; }
.grid .cell {
    position: relative;
    outline: 1px solid #217346;
    outline-offset: -1px;
}
.fill-opt {
    position: absolute;
    right: 100%;
    top: -1px;
    width: 8px;
    height: 9px;
    display: flex;
    align-items: center;
    justify-content: center;
    background: #fff;
    border: 1px solid #ccc;
}
.tooltip {
    position: absolute;
    left: 445px;
    top: 0;
    width: 139px;
    height: 55px;
    padding: 4px 6px;
    background: #fff;
    border: 1px solid #c0c0c0;
    box-shadow: 1px 1px 2px rgba(0, 0, 0, 0.25);
    line-height: 11px;
    color: #666;
    white-space: nowrap;
}
.tooltip p {
    margin: 2px 0 0;
}

/* sheet tabs */
.sheets {
    display: flex;
    height: 15px;
    background: #e6e6e6;
    border-top: 1px solid #bbb;
    font-size: 9px;
}
.dots {
    width: 172px;
    padding-left: 18px;
    line-height: 13px;
}
.add {
    width: 32px;
    display: flex;
    align-items: center;
}
.add svg {
    width: 11px;
    height: 11px;
}
.tab {
    height: 13px;
    line-height: 9px;
    padding-bottom: 3px;
    flex: none;
    margin-right: 2px;
    text-align: center;
    color: #fff;
    overflow: hidden;
}
.t1 { width: 57px; background: #7030a0; }
.t2 { width: 91px; background: #002060; }
.t3 { width: 85px; background: #0070c0; }
.t4 { width: 55px; background: #00b0f0; color: #222; }
.t5 { width: 67px; background: #92d050; color: #222; }
.t6 { width: 64px; background: #ffc000; color: #222; }
.t7 { width: 56px; background: #c00000; }
.n {
    width: 18px;
    margin: 0;
    color: #555;
    border-right: 1px solid #b0b0b0;
}
.w { width: 24px; }
.current {
    background: #fff;
    color: #217346;
    font-weight: bold;
    border-bottom: 1px solid #217346;
}
.min { width: 44px; }
.arrows {
    flex: 1;
    display: flex;
    align-items: center;
    justify-content: flex-end;
    gap: 12px;
    padding-right: 14px;
}
.arrows i {
    border: 2px solid transparent;
    border-right-color: #aaa;
}
.arrows .r {
    border-color: transparent transparent transparent #aaa;
}

/* status bar */
.status {
    display: flex;
    align-items: center;
    height: 15px;
    padding: 0 8px 0 4px;
    background: #f3f3f3;
    border-top: 1px solid #d0d0d0;
    font-family: "Open Sans", sans-serif;
    font-size: 7px;
}
.macro {
    width: 9px;
    height: 9px;
    margin-left: 11px;
}
.views {
    display: flex;
    margin-left: auto;
}
.views button {
    display: flex;
    align-items: center;
    justify-content: center;
    width: 22px;
    height: 14px;
}
.views .on { background: #c6c6c6; }
.views svg {
    width: 9px;
    height: 9px;
}
.zoom-btn {
    width: 10px;
    font-size: 11px;
}
.zoom {
    appearance: none;
    width: 66px;
    height: 9px;
    background:
        linear-gradient(#aaa, #aaa) center / 100% 1px no-repeat,
        linear-gradient(#aaa, #aaa) center / 1px 5px no-repeat;
}
.zoom::-webkit-slider-thumb {
    appearance: none;
    width: 3px;
    height: 7px;
    background: #666;
}
.percent { margin-left: 4px; }

/* taskbar */
.taskbar {
    display: flex;
    justify-content: center;
    height: 32px;
    position: relative;
    background: #d2e5d2;
    border-top: 1px solid #c0d0c0;
}
.apps {
    display: flex;
    align-items: center;
    width: 382px;
}
.apps button {
    position: relative;
    display: flex;
    align-items: center;
    justify-content: center;
    flex: 1;
    height: 28px;
}
.apps svg {
    width: 16px;
    height: 16px;
}
.run::after, .open::after {
    content: "";
    position: absolute;
    bottom: 1px;
    width: 4px;
    height: 2px;
    border-radius: 1px;
    background: #777;
}
.open::after {
    width: 10px;
    background: #1a7fb0;
}
.open {
    background: #eaf3e8;
    border-radius: 3px;
}
.badge {
    position: absolute;
    top: 2px;
    right: 0;
    width: 11px;
    height: 11px;
    border-radius: 50%;
    background: #2b8290;
    color: #fff;
    font-size: 7px;
    line-height: 11px;
}
.mc {
    width: 16px;
    height: 16px;
    background: #b01218;
    color: #fff;
    font-size: 11px;
    line-height: 16px;
    font-weight: bold;
}
.tray {
    position: absolute;
    right: 12px;
    top: 0;
    height: 100%;
    display: flex;
    align-items: center;
    color: #222;
}
.s10 { width: 9px; height: 9px; margin-right: 17px; }
.lang { font-size: 9px; margin-right: 18px; }
.wifi { width: 11px; height: 9px; margin-right: 5px; }
.vol { width: 11px; height: 9px; margin-right: 5px; }
.bat { width: 12px; height: 9px; margin-right: 9px; }
.clock {
    font-size: 7px;
    line-height: 11px;
}
```
FILE: script.js
```js
// columns right to left: letter, width
const columns = [
    ["", 11], ["A", 44], ["B", 43], ["C", 51], ["D", 72], ["E", 52], ["F", 34], ["G", 34],
    ["H", 45], ["I", 33], ["J", 33], ["K", 33], ["L", 45], ["M", 45], ["N", 44], ["O", 45],
    ["P", 45], ["Q", 45], ["R", 45], ["S", 45], ["T", 44], ["U", 45], ["V", 45], ["W", 45]
];
const total = columns.reduce((sum, c) => sum + c[1], 0);

document.getElementById("cols").innerHTML = columns
    .map(c => `<col style="width:${c[1] / total * 100}%">`).join("");

document.getElementById("letters").innerHTML = columns
    .map(c => `<th class="${c[0] === "E" ? "sel" : ""}">${c[0]}</th>`).join("");

// row 5: debit / credit captions
let sides = '<th class="num">5</th>';
columns.slice(4).forEach(c => {
    if (c[0] === "H") return;
    const name = "DFIKMOQSUW".includes(c[0]) ? "مدين" : "دائن";
    const cls = "IJ".includes(c[0]) ? "lime" : "DEFG".includes(c[0]) ? "blue thick" : "blue";
    sides += `<td class="${cls}">${name}</td>`;
});
document.getElementById("sides").innerHTML = sides;

const entries = [
    { B: "2021-01-01", D: "مخزون", E: "البنك الاهلى المصرى", sum: 100000, P: 100000, W: 100000 },
    { B: "2021-01-01", D: "ضريبة القيمة المضافة", E: "البنك الاهلى المصرى", sum: 14000, P: 14000 },
    { B: "2021-01-03", D: "البنك الاهلى المصرى", E: "المبيعات النقدية", sum: 200000, O: 200000 },
    { B: "2021-01-03", D: "البنك الاهلى المصرى", E: "ضريبة القيمة المضافة", sum: 28000, O: 28000 },
    { B: "2021-01-03", D: "تكلفة المبيعات", E: "مخزون", sum: 100000 }
];

let html = "";
for (let i = 0; i < 43; i++) {
    const e = entries[i] || {};
    html += `<tr><th class="num${i === 14 ? " sel" : ""}">${i + 6}</th><td class="id">${i + 1}</td>`;
    columns.slice(2).forEach(([col]) => {
        let cls = "", value = e[col] || "";
        if (col === "D" || col === "E") cls = "account";
        if (col === "F" || col === "G") value = e.sum || "";
        if (col === "I" || col === "J") value = e.sum || 0;
        if (col === "J") cls = "frz";
        if (col === "H") cls = "full";
        if (col >= "K") {
            value = e[col] || 0;
            cls = "KMOQSUW".includes(col) ? "red" : "err";
        }
        if (col === "E" && i === 14) {
            cls = "cell";
            value = '<button class="fill-opt" aria-label="Fill options"><i class="caret"></i></button>';
        }
        html += `<td class="${cls}">${value}</td>`;
    });
    html += "</tr>";
}
document.getElementById("rows").innerHTML = html;
```
